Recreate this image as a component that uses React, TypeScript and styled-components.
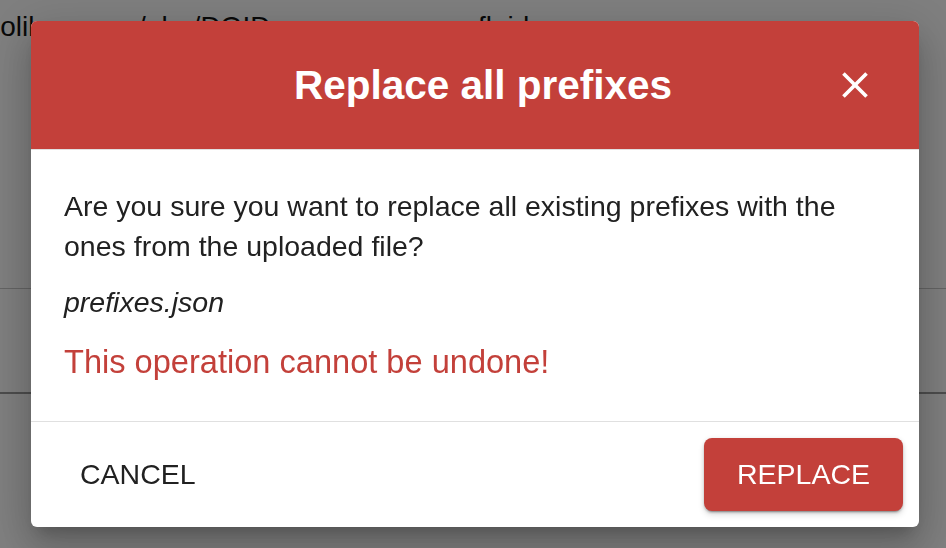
import React from "react";
import styled, { createGlobalStyle } from "styled-components";

const red = "#c3403a";

const GlobalStyle = createGlobalStyle`
  html, body {
    margin: 0;
    height: 100%;
    overflow: hidden;
  }
  body {
    font-family: "Liberation Sans", Arial, Helvetica, sans-serif;
    background: #ffffff;
    color: #212121;
  }
`;

function CloseIcon() {
  return (
    <svg width="44" height="44" viewBox="0 0 24 24" aria-hidden="true">
      <path
        fill="#ffffff"
        d="M19 6.41 17.59 5 12 10.59 6.41 5 5 6.41 10.59 12 5 17.59 6.41 19 12 13.41 17.59 19 19 17.59 13.41 12z"
      />
    </svg>
  );
}

function App() {
  return (
    <>
      <GlobalStyle />
      <Page>
        <TableRow>
          <Cell $width={509} $offset={-31}>
            obolibrary.org/obo/DOID_
          </Cell>
          <Cell>fluid</Cell>
        </TableRow>
        <TableRow $height={105} $heavy />
      </Page>
      <Backdrop>
        <Dialog role="dialog" aria-labelledby="dialog-title">
          <Header>
            <Title id="dialog-title">Replace all prefixes</Title>
            <CloseButton aria-label="close">
              <CloseIcon />
            </CloseButton>
          </Header>
          <Content>
            <Paragraph>
              Are you sure you want to replace all existing prefixes with the
              ones from the uploaded file?
            </Paragraph>
            <FileName>prefixes.json</FileName>
            <Warning>This operation cannot be undone!</Warning>
          </Content>
          <Footer>
            <Button>Cancel</Button>
            <Button $variant="contained">Replace</Button>
          </Footer>
        </Dialog>
      </Backdrop>
    </>
  );
}

const Page = styled.div`
  display: flex;
  flex-direction: column;
  width: 100%;
`;

const TableRow = styled.div<{ $height?: number; $heavy?: boolean }>`
  display: flex;
  align-items: flex-start;
  height: ${(p) => p.$height ?? 289}px;
  padding-top: 11px;
  box-sizing: border-box;
  border-bottom: ${(p) => (p.$heavy ? "2px solid #9a9a9a" : "1px solid #c8c8c8")};
  font-size: 28px;
  color: #111;
  white-space: nowrap;
`;

const Cell = styled.div<{ $width?: number; $offset?: number }>`
  flex: ${(p) => (p.$width ? `0 0 ${p.$width}px` : "1")};
  margin-left: ${(p) => p.$offset ?? 0}px;
  overflow: hidden;
`;

const Backdrop = styled.div`
  position: fixed;
  inset: 0;
  background: rgba(0, 0, 0, 0.5);
  display: flex;
  align-items: flex-start;
  justify-content: flex-start;
  padding: 21px 0 0 31px;
`;

const Dialog = styled.div`
  width: 888px;
  display: flex;
  flex-direction: column;
  background: #ffffff;
  border-radius: 6px;
  overflow: hidden;
  box-shadow: 0px 11px 15px -7px rgba(0, 0, 0, 0.2),
    0px 24px 38px 3px rgba(0, 0, 0, 0.14), 0px 9px 46px 8px rgba(0, 0, 0, 0.12);
`;

const Header = styled.div`
  display: grid;
  grid-template-columns: 1fr auto 1fr;
  align-items: center;
  height: 128px;
  background: ${red};
  border-bottom: 1px solid #e0e0e0;
  color: #ffffff;
`;

const Title = styled.h2`
  grid-column: 2;
  margin: 0;
  padding-left: 16px;
  font-size: 40.5px;
  font-weight: 700;
  line-height: 1.2;
  white-space: nowrap;
`;

const CloseButton = styled.button`
  grid-column: 3;
  justify-self: end;
  display: flex;
  align-items: center;
  justify-content: center;
  width: 48px;
  height: 48px;
  margin-right: 40px;
  padding: 0;
  border: none;
  background: transparent;
  cursor: pointer;
`;

const Content = styled.div`
  padding: 36px 33px 34px;
  border-bottom: 1px solid #e0e0e0;
  font-size: 28.5px;
  line-height: 40px;
`;

const Paragraph = styled.p`
  margin: 0 0 16px;
`;

const FileName = styled.p`
  margin: 0 0 16px;
  font-style: italic;
`;

const Warning = styled.p`
  margin: 0;
  font-size: 32.6px;
  line-height: 1.5;
  color: ${red};
`;

const Footer = styled.div`
  display: flex;
  align-items: center;
  justify-content: space-between;
  height: 105px;
  padding: 0 16px;
`;

const Button = styled.button<{ $variant?: "text" | "contained" }>`
  height: 73px;
  padding: 0 33px;
  border: none;
  border-radius: 8px;
  font-family: inherit;
  font-size: 28.5px;
  font-weight: 400;
  text-transform: uppercase;
  cursor: pointer;
  color: ${(p) => (p.$variant === "contained" ? "#ffffff" : "#212121")};
  background: ${(p) => (p.$variant === "contained" ? red : "transparent")};
  box-shadow: ${(p) =>
    p.$variant === "contained"
      ? "0px 3px 1px -2px rgba(0,0,0,0.2), 0px 2px 2px 0px rgba(0,0,0,0.14), 0px 1px 5px 0px rgba(0,0,0,0.12), 0 4px 6px rgba(0,0,0,0.12)"
      : "none"};
`;

export default App;
